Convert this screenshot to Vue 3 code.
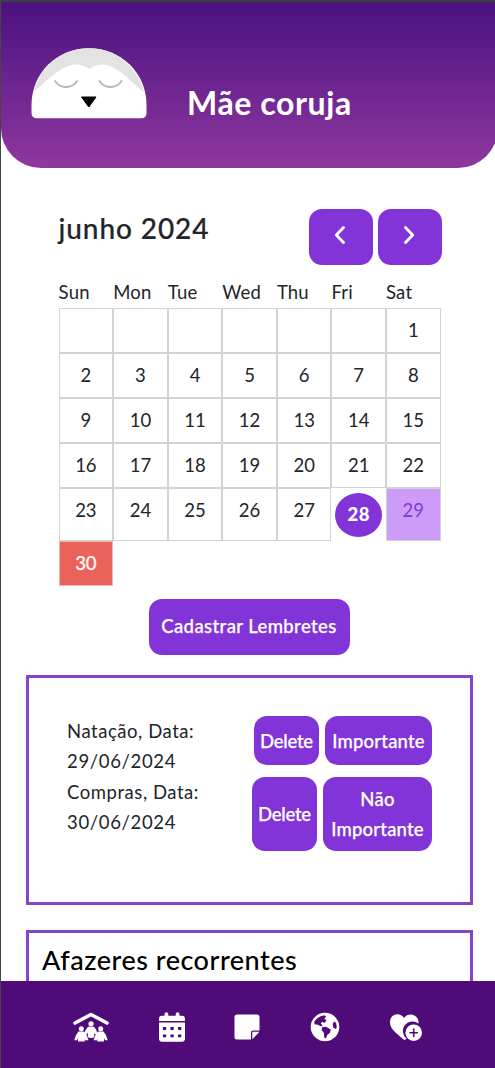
<script setup>
const weekdays = ['Sun', 'Mon', 'Tue', 'Wed', 'Thu', 'Fri', 'Sat']
const days = [...Array(6).fill(''), ...Array.from({ length: 30 }, (_, i) => i + 1)]
const kind = (d) => ({ today: d === 28, soft: d === 29, important: d === 30 })
</script>

<template>
  <div class="app">
    <main class="page">
      <header class="hero">
        <svg class="owl" width="116" height="71" viewBox="0 0 116 71">
          <path d="M.5 57C.5 25 26 .3 58 .3S115.500 25 115.500 57v8q0 5.300-5.500 5.300H6Q.5 70.300.5 65z" fill="#fff" />
          <path d="M3 42.500C10 17 32 .3 58 .3S106 18 113.300 44c-4-2-7-5-10-8C91 24 80 16.500 71 16.500q-7 0-12.500 4.500Q52 16.300 44 16.500C33 17 19 29 12 36q-5 5-9 6.500z" fill="#e3e3e4" />
          <path d="M24 33c5 8 17 8 22 0M68.500 33c5 8 17 8 22 0" fill="none" stroke="#b5b5b5" stroke-width="1.800" stroke-linecap="round" />
          <path d="M50.500 49h14.500L57.800 59z" stroke="#000" stroke-width="1" stroke-linejoin="round" />
        </svg>
        <h1>Mãe coruja</h1>
      </header>

      <section class="calendar">
        <div class="cal-head">
          <h2>junho 2024</h2>
          <div class="arrows">
            <button><svg width="12" height="18" viewBox="0 0 12 18"><path d="M9.500 1.500 2.300 9l7.200 7.500" /></svg></button>
            <button><svg width="12" height="18" viewBox="0 0 12 18"><path d="M2.500 1.500 9.700 9l-7.200 7.500" /></svg></button>
          </div>
        </div>
        <div class="grid week"><span v-for="w in weekdays" :key="w">{{ w }}</span></div>
        <div class="grid days">
          <div v-for="(d, i) in days" :key="i" class="day" :class="kind(d)"><span>{{ d }}</span></div>
        </div>
      </section>

      <button class="register">Cadastrar Lembretes</button>

      <section class="card reminders">
        <div class="texts">
          <p>Natação, Data:<br /><span class="date">29/06/2024</span></p>
          <p>Compras, Data:<br /><span class="date">30/06/2024</span></p>
        </div>
        <div class="actions">
          <div class="pair first"><button class="del">Delete</button><button class="imp">Importante</button></div>
          <div class="pair second"><button class="del">Delete</button><button class="imp">Não<br />Importante</button></div>
        </div>
      </section>

      <section class="card tasks"><h3>Afazeres recorrentes</h3></section>
    </main>

    <nav>
      <svg width="36" height="30" viewBox="0 0 36 30">
        <path d="M2 11 18 2.500 34 11" fill="none" stroke="#fff" stroke-width="3.600" stroke-linecap="round" stroke-linejoin="round" />
        <g fill="#fff">
          <circle cx="18" cy="11.800" r="2.600" /><circle cx="8.300" cy="16.800" r="2.500" /><circle cx="27.700" cy="16.800" r="2.500" />
          <path d="M15 14.800h6q3 3 3.300 7l-2.300.8-.8-2v4.700q-3.200 1.500-6.400 0v-4.700l-1.300 2-2.100-.8q.5-4 3.600-7z" />
          <path d="M5.500 19.500h5.500q3.500 3.500 4.500 8.800H12l-.3-2v3.300H5V26l-1 2.300H1.300q1-5.500 4.200-8.800zM25 19.500h5.500q3.200 3.300 4.200 8.800H32L31 26v3.600h-6.700V26L24 28.300h-3.500q1-5.300 4.500-8.800z" />
        </g>
      </svg>
      <svg width="26" height="30" viewBox="0 0 448 512">
        <path fill="#fff" d="M96 32V64H48C21.500 64 0 85.500 0 112v42H448V112c0-26.500-21.500-48-48-48H352V32c0-17.700-14.300-32-32-32s-32 14.300-32 32V64H160V32c0-17.700-14.300-32-32-32S96 14.300 96 32zM448 180H0V464c0 26.500 21.500 48 48 48H400c26.500 0 48-21.500 48-48V180z" />
        <path fill="#4f0c79" d="M68 258h56v50H68zm130 0h56v50h-56zm130 0h56v50h-56zM68 384h56v50H68zm130 0h56v50h-56zm130 0h56v50h-56z" />
      </svg>
      <svg width="26" height="26" viewBox="0 0 26 26">
        <path fill="#fff" d="M3 .5h20q2.500 0 2.500 2.500v13.500H19q-2 0-2 2v7H3Q.5 25.500.5 23V3Q.5.500 3 .5zM18.300 25.300V18.500q0-.7.700-.7h6.500z" />
      </svg>
      <svg width="30" height="30" viewBox="0 0 30 30">
        <circle cx="15" cy="15" r="14.300" fill="#fff" />
        <path fill="#4f0c79" d="M4.300 9.500Q8 4 14.500 3.300l1.700 1.500-2 2 2.300 1.500-1.700 2.500-2.800-.8-1.300 1.800 2 1.500-1.700 1.300-3-1.800-3.500-.5zM12 15.200l4-.5 4.800 2.800-.8 3.300-2.600 1.900-1.400 3.600-1.700-.5-.4-5-2.200-2.500zM24 9.500l2 1.300.8 4.200-1 2-2.600-1.500-.5-3.500z" />
      </svg>
      <svg width="34" height="30" viewBox="0 0 34 30">
        <path fill="#fff" d="M15 6C11-.5 1 2 1 10c0 5 3 8 6 11l7.500 6.500q1 .8 2 0l1-1a9.500 9.500 0 0 1 12-15C30.300 2.500 19.500-.5 15 6z" />
        <circle cx="24.700" cy="20.700" r="8.300" fill="#fff" />
        <path d="M24.700 17v7.400M21 20.700h7.400" stroke="#4f0c79" stroke-width="1.600" stroke-linecap="round" />
      </svg>
    </nav>
  </div>
</template>

<style>
body { background: #fff; }
</style>

<style scoped>
* { box-sizing: border-box; }
h1, h2, h3, p { margin: 0; }
.app {
  width: 495px; height: 1068px; display: flex; flex-direction: column; overflow: hidden;
  border-left: 1px solid #47444a; border-top: 2px solid #403d45;
  background: #fff; color: #212529; font-family: Lato, "Open Sans", sans-serif;
}
.page { flex: 1; min-height: 0; overflow: hidden; display: flex; flex-direction: column; }
.hero {
  height: 166px; flex: none; display: flex; margin-right: -3px; padding: 46px 0 0 30px; gap: 40px;
  border-radius: 0 0 40px 40px; background: linear-gradient(#4a1280, #8f379f); color: #fff;
}
h1 { font-size: 32px; line-height: 40px; font-weight: 700; padding-top: 35px; letter-spacing: 0.6px; white-space: nowrap; }
.calendar { flex: none; margin: 40px 53px 0 57.6px; height: 391px; }
.cal-head { height: 57px; display: flex; justify-content: space-between; }
h2 { font-size: 28px; font-weight: 500; line-height: 41px; letter-spacing: 0.9px; -webkit-text-stroke: 0.2px #212529; white-space: nowrap; }
.arrows { display: flex; gap: 5px; }
button {
  background: #8234d9; color: #fff; border: 0; border-radius: 13px; padding: 0;
  font-family: inherit; font-size: 18.5px; line-height: 30px; font-weight: 500; white-space: nowrap;
  letter-spacing: 0.2px; -webkit-text-stroke: 0.25px #fff;
}
.arrows button { display: flex; align-items: center; justify-content: center; width: 64px; height: 56px; margin-top: 1px; padding: 0 3px 5px 0; }
.arrows svg { fill: none; stroke: #fff; stroke-width: 2.8; stroke-linecap: round; stroke-linejoin: round; }
.grid { display: grid; grid-template-columns: repeat(7, 1fr); width: 382px; }
.week { height: 43px; padding-top: 12px; font-size: 18.5px; line-height: 30px; letter-spacing: 0.2px; }
.days { grid-template-rows: repeat(4, 45px) 53px 45px; }
.day { border: 1px solid #d3d3d3; display: flex; justify-content: center; font-size: 18.5px; line-height: 42px; }
.today { border-color: transparent; padding: 4px 3px 3px; }
.today span { flex: 1; border-radius: 50%; background: #8234d9; color: #fff; font-weight: 900; text-align: center; line-height: 42px; letter-spacing: 0.4px; }
.soft { background: #cd9cf8; color: #7e3bd0; }
.important { background: #e9635b; border-color: #e9b6b6; color: #fff; -webkit-text-stroke: 0.25px #fff; }
.register { flex: none; align-self: center; width: 201px; height: 56px; margin: 0 0 0 2px; padding-bottom: 2px; letter-spacing: 0.4px; }
.card { flex: none; margin: 0 22px 0 25px; border: 3px solid #8344ce; }
.reminders { height: 230px; margin-top: 20px; padding: 38px 38px 0; display: flex; justify-content: space-between; }
.texts { font-size: 18.5px; line-height: 30px; letter-spacing: 0.55px; white-space: nowrap; }
.texts p + p { margin-top: 1px; }
.date { letter-spacing: 0.65px; }
.pair { display: flex; justify-content: flex-end; gap: 6px; }
.first { height: 49px; }
.second { height: 74px; margin-top: 12px; }
.del { width: 65px; letter-spacing: -0.25px; }
.first .imp { width: 107px; }
.second .imp { width: 109px; }
.tasks { height: 240px; margin-top: 25px; padding: 7px 13px; }
h3 { color: #000; font-size: 27px; font-weight: 500; line-height: 40px; letter-spacing: 0.5px; white-space: nowrap; }
nav { flex: none; height: 87px; background: #4f0c79; display: flex; padding: 0 72px; justify-content: space-between; align-items: center; }
nav svg { display: block; margin-top: 4px; }
</style>
